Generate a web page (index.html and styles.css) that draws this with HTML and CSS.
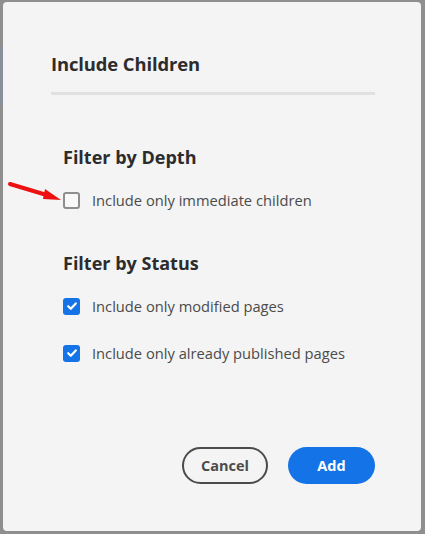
FILE: index.html
```html
<!DOCTYPE html>
<html>
<head>
<meta charset="utf-8">
<link rel="stylesheet" href="styles.css">
</head>
<body>
<div class="backdrop">
  <div class="strip"></div>
  <div class="dialog">
    <h1 class="title">Include Children</h1>
    <div class="divider"></div>
    <section class="group">
      <h2 class="group-title">Filter by Depth</h2>
      <label class="check">
        <span class="box"></span>
        <span class="label">Include only immediate children</span>
      </label>
    </section>
    <section class="group status">
      <h2 class="group-title">Filter by Status</h2>
      <label class="check">
        <span class="box checked"><svg viewBox="0 0 16 16" width="16" height="16"><path d="M4.2 8.2 L6.8 10.8 L11.8 5.4" fill="none" stroke="#fff" stroke-width="2.2" stroke-linecap="round" stroke-linejoin="round"/></svg></span>
        <span class="label">Include only modified pages</span>
      </label>
      <label class="check">
        <span class="box checked"><svg viewBox="0 0 16 16" width="16" height="16"><path d="M4.2 8.2 L6.8 10.8 L11.8 5.4" fill="none" stroke="#fff" stroke-width="2.2" stroke-linecap="round" stroke-linejoin="round"/></svg></span>
        <span class="label">Include only already published pages</span>
      </label>
    </section>
    <div class="actions">
      <button class="btn secondary">Cancel</button>
      <button class="btn primary">Add</button>
    </div>
  </div>
  <svg class="arrow" width="64" height="30" viewBox="0 0 64 30">
    <path d="M10 12 L50 24" stroke="#ee1111" stroke-width="4" stroke-linecap="round"/>
    <path d="M61 28 L45 17 L43 27 Z" fill="#ee1111"/>
  </svg>
</div>
</body>
</html>
```
FILE: styles.css
```css
html, body {
  margin: 0;
  padding: 0;
}
body {
  background: #8f8f8f;
  font-family: "Open Sans", "Noto Sans", sans-serif;
  width: 425px;
  height: 534px;
  overflow: hidden;
}
.backdrop {
  position: relative;
  width: 425px;
  height: 534px;
  padding: 2px 4px 3px 3px;
  box-sizing: border-box;
}
.strip {
  position: absolute;
  left: 0;
  top: 46px;
  width: 3px;
  height: 60px;
  background: #88909a;
}
.dialog {
  background: #f4f4f4;
  border-radius: 4px;
  height: 100%;
  box-sizing: border-box;
  padding: 50px 46px 0 48px;
  display: flex;
  flex-direction: column;
}
.title {
  margin: 0;
  font-size: 18.4px;
  font-weight: 700;
  color: #2c2c2c;
  line-height: 24px;
  letter-spacing: -0.1px;
}
.divider {
  height: 3px;
  background: #e1e1e1;
  margin-top: 16px;
}
.group {
  padding-left: 12px;
}
.group-title {
  margin: 0;
  font-size: 18px;
  font-weight: 700;
  color: #2c2c2c;
  line-height: 24px;
}
.group:first-of-type .group-title {
  margin-top: 50px;
}
.status .group-title {
  margin-top: 41px;
}
.check {
  display: flex;
  align-items: center;
  gap: 12px;
  height: 20px;
}
.group:first-of-type .check {
  margin-top: 21px;
}
.status .check {
  margin-top: 21px;
}
.status .check + .check {
  margin-top: 27px;
}
.box {
  width: 17px;
  height: 17px;
  box-sizing: border-box;
  border: 2px solid #8e8e8e;
  border-radius: 3px;
  background: #f8f8f8;
  display: flex;
  align-items: center;
  justify-content: center;
  flex: none;
}
.box.checked {
  border: none;
  background: #1473e6;
}
.box svg {
  display: block;
}
.label {
  font-size: 14.7px;
  color: #4b4b4b;
  line-height: 20px;
}
.actions {
  margin-top: auto;
  margin-bottom: 47px;
  display: flex;
  justify-content: flex-end;
  gap: 20px;
}
.btn {
  height: 37px;
  border-radius: 19px;
  font-family: inherit;
  font-size: 14.5px;
  font-weight: 700;
  padding: 0;
  box-sizing: border-box;
}
.secondary {
  width: 86px;
  background: transparent;
  border: 2px solid #4b4b4b;
  color: #4b4b4b;
}
.primary {
  width: 87px;
  background: #1473e6;
  border: none;
  color: #fff;
}
.arrow {
  position: absolute;
  left: 0;
  top: 172px;
}
```
